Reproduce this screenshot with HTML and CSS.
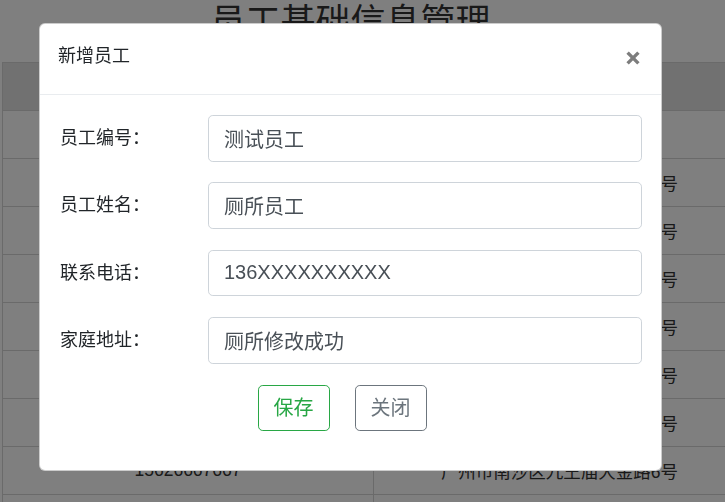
FILE: index.html
```html
<!DOCTYPE html>
<html lang="zh-CN">
<head>
<meta charset="utf-8">
<title>员工基础信息管理</title>
<link rel="stylesheet" href="styles.css">
</head>
<body>
<div class="page">
  <h1 class="title">员工基础信息管理</h1>
  <div class="grid">
    <div class="row head"><div class="cell"></div><div class="cell"></div></div>
    <div class="row"><div class="cell"></div><div class="cell"></div></div>
    <div class="row"><div class="cell"></div><div class="cell">广州市南沙区九王庙大金路6号</div></div>
    <div class="row"><div class="cell"></div><div class="cell">广州市南沙区九王庙大金路6号</div></div>
    <div class="row"><div class="cell"></div><div class="cell">广州市南沙区九王庙大金路6号</div></div>
    <div class="row"><div class="cell"></div><div class="cell">广州市南沙区九王庙大金路6号</div></div>
    <div class="row"><div class="cell"></div><div class="cell">广州市南沙区九王庙大金路6号</div></div>
    <div class="row"><div class="cell"></div><div class="cell">广州市南沙区九王庙大金路6号</div></div>
    <div class="row"><div class="cell">15626667667</div><div class="cell">广州市南沙区九王庙大金路6号</div></div>
    <div class="row"><div class="cell"></div><div class="cell"></div></div>
  </div>
</div>
<div class="backdrop"></div>
<div class="modal">
  <div class="modal-header">
    <h5 class="modal-title">新增员工</h5>
    <button class="close" type="button" aria-label="Close">
      <svg width="16" height="16" viewBox="0 0 16 16"><path d="M2.6 2.6L13.4 13.4M13.4 2.6L2.6 13.4" stroke="#7d7d7d" stroke-width="3.4" fill="none"/></svg>
    </button>
  </div>
  <div class="modal-body">
    <div class="form-row"><label class="label">员工编号：</label><input class="field" type="text" value="测试员工"></div>
    <div class="form-row"><label class="label">员工姓名：</label><input class="field" type="text" value="厕所员工"></div>
    <div class="form-row"><label class="label">联系电话：</label><input class="field" type="text" value="136XXXXXXXXXX"></div>
    <div class="form-row"><label class="label">家庭地址：</label><input class="field" type="text" value="厕所修改成功"></div>
    <div class="actions">
      <button class="btn btn-save" type="button">保存</button>
      <button class="btn btn-close" type="button">关闭</button>
    </div>
  </div>
</div>
</body>
</html>
```
FILE: styles.css
```css
html, body {
  margin: 0;
  overflow: hidden;
}
body {
  font-family: "Liberation Sans", "Noto Sans CJK SC", sans-serif;
  color: #212529;
  background: #fff;
}
.page {
  width: 760px;
}
.title {
  margin: 0;
  width: 701px;
  height: 58px;
  padding-top: 4px;
  text-align: center;
  font-size: 35px;
  line-height: 35px;
  font-weight: 400;
  color: #333;
}
.grid {
  margin-left: 2px;
  width: 744px;
  border-top: 1px solid #d4d4d4;
  border-left: 1px solid #d4d4d4;
}
.row {
  display: flex;
  height: 48px;
  box-sizing: border-box;
  border-bottom: 1px solid #d4d4d4;
}
.row.head {
  background: #e3e3e3;
}
.cell {
  box-sizing: border-box;
  width: 371px;
  border-right: 1px solid #d4d4d4;
  display: flex;
  align-items: center;
  justify-content: center;
  font-size: 17.5px;
  color: #333;
}
.cell + .cell {
  width: 372px;
}
.backdrop {
  position: fixed;
  inset: 0;
  background: rgba(0, 0, 0, 0.5);
}
.modal {
  position: fixed;
  top: 23px;
  left: 39px;
  width: 623px;
  box-sizing: border-box;
  background: #fff;
  border: 1px solid rgba(0, 0, 0, 0.2);
  border-radius: 6px;
}
.modal-header {
  display: flex;
  align-items: flex-start;
  justify-content: space-between;
  padding: 17px 20px 23px 18px;
  border-bottom: 1px solid #e9ecef;
}
.modal-title {
  margin: 0;
  font-size: 18px;
  line-height: 30px;
  font-weight: 400;
  color: #212529;
}
.close {
  margin: 9px 0 0;
  padding: 0;
  border: 0;
  background: transparent;
  width: 16px;
  height: 16px;
  line-height: 0;
}
.modal-body {
  padding: 20px 19px 38.7px 20px;
}
.form-row {
  display: flex;
  align-items: flex-start;
  margin-bottom: 20.6px;
}
.form-row:nth-child(4) {
  margin-bottom: 21.3px;
}
.label {
  width: 140px;
  margin-right: 8px;
  flex: none;
  padding-top: 10px;
  font-size: 18px;
  line-height: 27px;
  color: #212529;
}
.field {
  flex: 1;
  min-width: 0;
  height: 46.7px;
  box-sizing: border-box;
  margin: 0;
  padding: 0 15px;
  border: 1px solid #ced4da;
  border-radius: 4.8px;
  font-family: inherit;
  font-size: 20px;
  color: #495057;
  background: #fff;
  outline: none;
}
.actions {
  display: flex;
  justify-content: center;
  gap: 25px;
  padding-right: 18px;
}
.btn {
  height: 46px;
  box-sizing: border-box;
  margin: 0;
  padding: 0 15px;
  background: #fff;
  border: 1px solid;
  border-radius: 4.8px;
  font-family: inherit;
  font-size: 20px;
  line-height: 1;
}
.btn-save {
  color: #28a745;
  border-color: #28a745;
}
.btn-close {
  color: #6c757d;
  border-color: #6c757d;
}
```
